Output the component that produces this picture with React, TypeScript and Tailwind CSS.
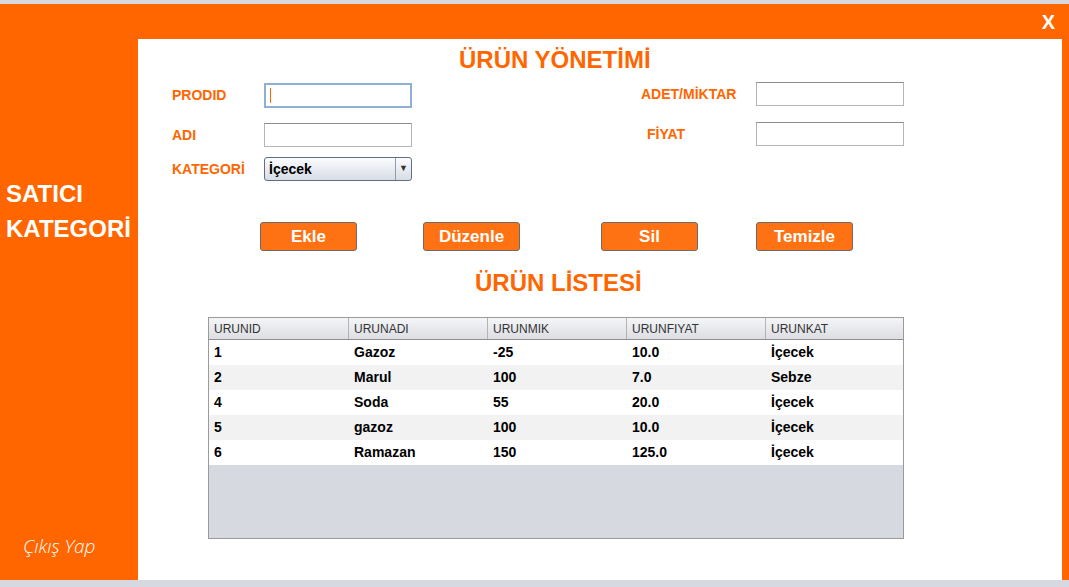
const rows = [
  { id: '1', ad: 'Gazoz', mik: '-25', fiyat: '10.0', kat: 'İçecek' },
  { id: '2', ad: 'Marul', mik: '100', fiyat: '7.0', kat: 'Sebze' },
  { id: '4', ad: 'Soda', mik: '55', fiyat: '20.0', kat: 'İçecek' },
  { id: '5', ad: 'gazoz', mik: '100', fiyat: '10.0', kat: 'İçecek' },
  { id: '6', ad: 'Ramazan', mik: '150', fiyat: '125.0', kat: 'İçecek' },
];

const cols = ['URUNID', 'URUNADI', 'URUNMIK', 'URUNFIYAT', 'URUNKAT'];
const widths = ['w-[140px]', 'w-[139px]', 'w-[139px]', 'w-[139px]', 'w-[137px]'];

function OrangeButton({ label, className }: { label: string; className?: string }) {
  return (
    <button
      className={`w-[97px] h-[29px] rounded-[3px] border border-[#6b6b6b] bg-[#ff7214] text-white text-[17px] font-bold ${className ?? ''}`}
    >
      {label}
    </button>
  );
}

function TextBox({ focused }: { focused?: boolean }) {
  if (focused) {
    return (
      <div className="w-[148px] h-[25px] border-2 border-[#8fb0d6] bg-white flex items-center pl-[4px]">
        <div className="w-[1px] h-[15px] bg-[#ff6600]" />
      </div>
    );
  }
  return (
    <div className="w-[148px] h-[24px] border border-[#b5b5b5] border-t-[#8c8c8c] bg-white" />
  );
}

export default function App() {
  return (
    <div
      className="w-[1069px] h-[587px] flex flex-col bg-[#d6d9df] overflow-hidden"
      style={{ fontFamily: '"Liberation Sans", Arial, sans-serif' }}
    >
      <div className="h-[4px]" />
      <div className="h-[576px] bg-[#ff6600] flex flex-col">
        {/* top bar */}
        <div className="h-[35px] flex justify-end items-center pr-[14px]">
          <span className="text-white font-bold text-[20px] leading-none">X</span>
        </div>

        <div className="flex flex-1">
          {/* sidebar */}
          <div className="w-[138px] flex flex-col pl-[6px] text-white">
            <div className="mt-[137px] text-[24px] font-bold leading-[35px]">
              <div>SATICI</div>
              <div>KATEGORİ</div>
            </div>
            <div
              className="mt-auto mb-[20px] ml-[17px] text-[19px] italic font-light"
              style={{ fontFamily: '"Open Sans", sans-serif' }}
            >
              Çıkış Yap
            </div>
          </div>

          {/* main panel */}
          <div className="w-[924px] bg-white flex flex-col">
            <h1 className="mt-[7px] h-[28px] ml-[321px] text-[24px] font-bold text-[#ff6600] leading-[28px]">
              ÜRÜN YÖNETİMİ
            </h1>

            <div className="flex text-[14px] font-bold text-[#ff6600]">
              {/* left column */}
              <div className="ml-[34px] w-[380px] flex flex-col mt-[9px]">
                <div className="flex items-center h-[25px]">
                  <span className="w-[92px]">PRODID</span>
                  <TextBox focused />
                </div>
                <div className="flex items-center h-[24px] mt-[15px]">
                  <span className="w-[92px]">ADI</span>
                  <TextBox />
                </div>
                <div className="flex items-center h-[24px] mt-[10px]">
                  <span className="w-[92px]">KATEGORİ</span>
                  <div className="w-[148px] h-[24px] rounded-[3px] border border-[#5e6f82] bg-gradient-to-b from-[#fbfcfd] to-[#d7dde6] flex items-center text-black text-[14px]">
                    <span className="flex-1 pl-[4px]">İçecek</span>
                    <div className="w-[16px] h-full border-l border-[#8f9db0] flex items-center justify-center text-[9px] text-[#333]">
                      ▼
                    </div>
                  </div>
                </div>
              </div>

              {/* right column */}
              <div className="ml-[89px] flex flex-col mt-[8px]">
                <div className="flex items-center h-[24px]">
                  <span className="w-[115px]">ADET/MİKTAR</span>
                  <TextBox />
                </div>
                <div className="flex items-center h-[24px] mt-[16px]">
                  <span className="w-[115px] pl-[6px]">FİYAT</span>
                  <TextBox />
                </div>
              </div>
            </div>

            <div className="flex mt-[41px]">
              <OrangeButton label="Ekle" className="ml-[122px]" />
              <OrangeButton label="Düzenle" className="ml-[66px]" />
              <OrangeButton label="Sil" className="ml-[81px]" />
              <OrangeButton label="Temizle" className="ml-[58px]" />
            </div>

            <h2 className="mt-[18px] h-[28px] ml-[337px] text-[24px] font-bold text-[#ff6600] leading-[28px]">
              ÜRÜN LİSTESİ
            </h2>

            {/* table */}
            <div className="ml-[70px] mt-[20px] w-[696px] h-[222px] border border-[#9a9a9a] bg-[#d6d9e0] flex flex-col">
              <div className="flex h-[22px] bg-gradient-to-b from-[#f4f5f7] to-[#dcdee3] border-b border-[#8f8f8f]">
                {cols.map((c, i) => (
                  <div
                    key={c}
                    className={`${widths[i]} h-full flex items-center pl-[5px] text-[12px] text-[#333] ${i < 4 ? 'border-r border-[#b3b3b3]' : ''}`}
                  >
                    {c}
                  </div>
                ))}
              </div>
              {rows.map((r, idx) => (
                <div
                  key={r.id}
                  className={`flex h-[25px] items-center text-[14px] font-bold text-black ${idx % 2 === 0 ? 'bg-white' : 'bg-[#f2f2f2]'}`}
                >
                  {[r.id, r.ad, r.mik, r.fiyat, r.kat].map((v, i) => (
                    <div key={i} className={`${widths[i]} pl-[5px]`}>
                      {v}
                    </div>
                  ))}
                </div>
              ))}
            </div>
          </div>
        </div>
      </div>
    </div>
  );
}
